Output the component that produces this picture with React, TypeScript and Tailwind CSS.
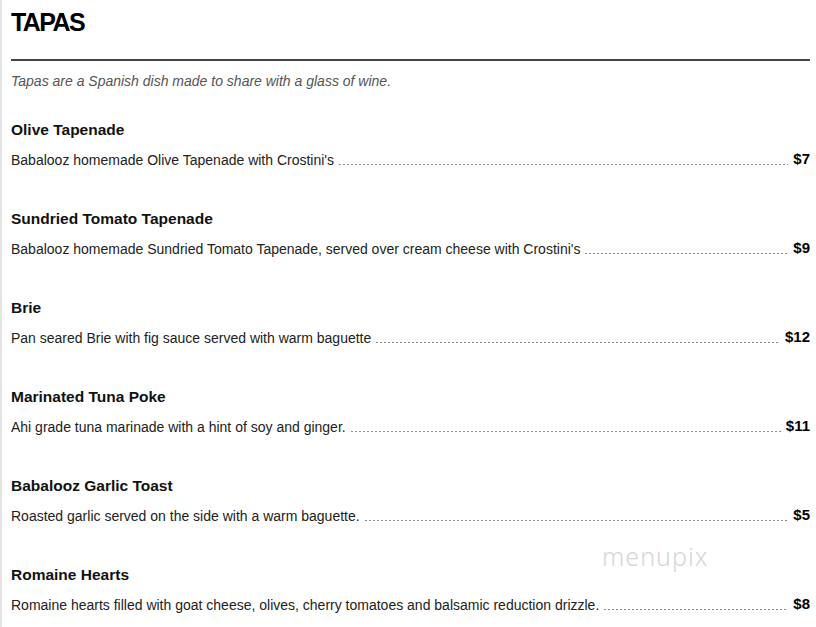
const items = [
  { name: "Olive Tapenade", desc: "Babalooz homemade Olive Tapenade with Crostini's", price: "$7" },
  {
    name: "Sundried Tomato Tapenade",
    desc: "Babalooz homemade Sundried Tomato Tapenade, served over cream cheese with Crostini's",
    price: "$9",
  },
  { name: "Brie", desc: "Pan seared Brie with fig sauce served with warm baguette", price: "$12" },
  { name: "Marinated Tuna Poke", desc: "Ahi grade tuna marinade with a hint of soy and ginger.", price: "$11" },
  { name: "Babalooz Garlic Toast", desc: "Roasted garlic served on the side with a warm baguette.", price: "$5" },
  {
    name: "Romaine Hearts",
    desc: "Romaine hearts filled with goat cheese, olives, cherry tomatoes and balsamic reduction drizzle.",
    price: "$8",
  },
];

const App = () => {
  return (
    <div className="relative w-[816px] h-[627px] overflow-hidden bg-white border-l-2 border-[#e4e4e4] pl-[9px] pr-[6px] font-['Liberation_Sans',Arial,sans-serif] text-[#111]">
      {/* Header */}
      <h1 className="pt-[7px] text-[25px] leading-[30px] font-bold tracking-[-1.6px] text-black">TAPAS</h1>
      <div className="mt-[22px] h-[2px] bg-[#444]" />
      <p className="mt-[12px] text-[14px] leading-[16px] italic text-[#555]">
        Tapas are a Spanish dish made to share with a glass of wine.
      </p>

      {/* Items */}
      <div className="mt-[32px] flex flex-col gap-[41px]">
        {items.map((item) => (
          <div key={item.name} className="flex flex-col">
            <h3 className="text-[15.5px] leading-[18px] font-bold text-[#111]">{item.name}</h3>
            <div className="mt-[10px] flex items-end">
              <span className="text-[14px] leading-[18px] text-[#222] whitespace-nowrap">{item.desc}</span>
              <span className="flex-1 mx-[5px] mb-[4px] h-[1px] bg-[linear-gradient(to_right,#8c8c8c_50%,transparent_0)] bg-[length:4px_1px] bg-repeat-x" />
              <span className="text-[15px] leading-[20px] font-bold text-black">{item.price}</span>
            </div>
          </div>
        ))}
      </div>

      {/* Watermark */}
      <div className="absolute left-[600px] top-[538px] text-[25px] font-light tracking-[1px] text-[#d6d6d6] font-['Noto_Sans',sans-serif] select-none">
        menupix
      </div>
    </div>
  );
};

export default App;
